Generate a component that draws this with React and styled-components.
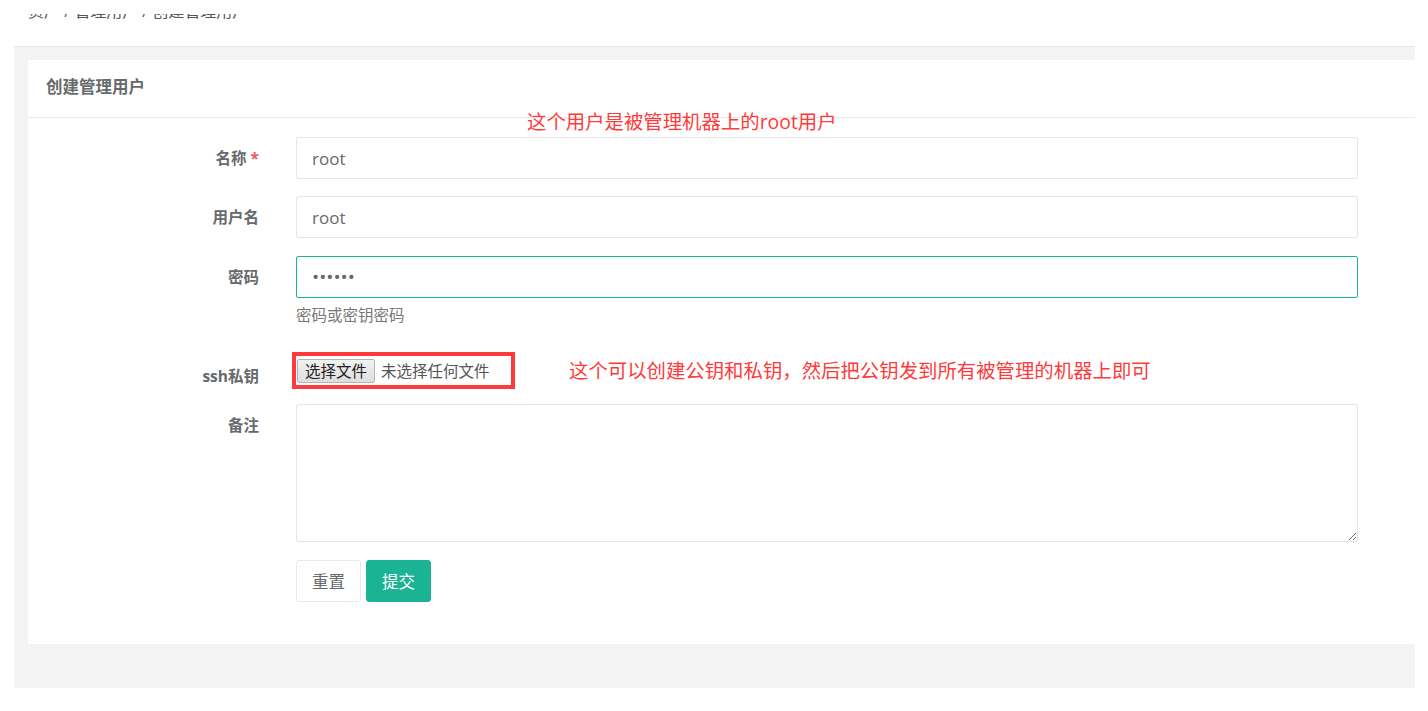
import React from 'react';
import styled, { createGlobalStyle } from 'styled-components';

const GlobalStyle = createGlobalStyle`
  body {
    margin: 0;
    background: #fff;
    font-family: "Open Sans", "Noto Sans CJK SC", sans-serif;
    color: #676a6c;
  }
`;

// Page frame
const TopBar = styled.div`
  height: 46px;
  overflow: hidden;
`;

const Crumbs = styled.div`
  margin: 14px 0 0 28px;
  height: 5px;
  overflow: hidden;
  font-size: 16px;
  line-height: 16px;
  color: #555;
  & > span {
    display: block;
    margin-top: -11px;
  }
`;

const Wrapper = styled.div`
  margin-left: 14px;
  width: 1401px;
  height: 642px;
  box-sizing: border-box;
  background: #f3f3f4;
  border-top: 1px solid #e7eaec;
  border-bottom-left-radius: 3px;
  padding: 13px 0 0 14px;
`;

// Card
const Card = styled.div`
  position: relative;
  background: #fff;
  height: 584px;
`;

const CardTitle = styled.div`
  height: 58px;
  box-sizing: border-box;
  border-bottom: 1px solid #e7eaec;
  padding: 0 0 6px 18px;
  display: flex;
  align-items: center;
  font-size: 16.5px;
  font-weight: 700;
  color: #676a6c;
`;

const Note = styled.div`
  font-size: 19.4px;
  line-height: 24px;
  color: #ff3a3a;
  white-space: nowrap;
`;

const TitleNote = styled(Note)`
  position: absolute;
  left: 499px;
  top: 50px;
`;

const Form = styled.form`
  padding-top: 19px;
`;

const Row = styled.div`
  display: grid;
  grid-template-columns: 231px 1062px;
  column-gap: 37px;
  align-items: start;
  margin-bottom: ${p => p.$gap || 0}px;
`;

const Label = styled.label`
  text-align: right;
  font-size: 15.5px;
  font-weight: 700;
  line-height: 42px;
  margin-top: ${p => p.$offset || 0}px;
  color: #676a6c;
`;

const Required = styled.span`
  color: #ed5565;
  margin-left: 4px;
`;

const Input = styled.input`
  display: block;
  width: 100%;
  height: 42px;
  box-sizing: border-box;
  border: 1px solid ${p => (p.$focus ? '#1ab394' : '#e5e6e7')};
  border-radius: 2px;
  padding: 0 15px;
  font-family: "Open Sans", "Noto Sans CJK SC", sans-serif;
  font-size: ${p => (p.type === 'password' ? 19 : 17)}px;
  color: #676a6c;
  outline: none;
  background: #fff;
`;

const Help = styled.div`
  margin-top: 7px;
  font-size: 15.5px;
  line-height: 20px;
  color: #777;
`;

const FileLine = styled.div`
  display: flex;
  align-items: center;
  gap: 54px;
  margin-left: -4px;
`;

const MarkBox = styled.div`
  border: 4px solid #ff3a3a;
  padding: 2px 2px 2px 1px;
  display: flex;
  align-items: center;
  width: 223px;
  height: 37px;
  box-sizing: border-box;
`;

const FileButton = styled.span`
  display: inline-block;
  height: 24px;
  line-height: 23px;
  padding: 0 7px;
  box-sizing: border-box;
  background: linear-gradient(#f2f2f2, #dedede);
  border: 1px solid #b5b5b5;
  border-radius: 2px;
  font-size: 15.5px;
  color: #222;
`;

const FileName = styled.span`
  margin-left: 6px;
  font-size: 15.5px;
  color: #555;
`;

const TextArea = styled.textarea`
  display: block;
  width: 100%;
  height: 138px;
  box-sizing: border-box;
  border: 1px solid #e5e6e7;
  border-radius: 2px;
  padding: 8px 15px;
  font-family: "Open Sans", "Noto Sans CJK SC", sans-serif;
  font-size: 16px;
  outline: none;
`;

const Actions = styled.div`
  display: flex;
  gap: 5px;
`;

const Button = styled.button`
  height: 42px;
  width: 65px;
  border-radius: 3px;
  font-family: "Open Sans", "Noto Sans CJK SC", sans-serif;
  font-size: 16.5px;
  cursor: pointer;
  border: 1px solid ${p => (p.$primary ? '#1ab394' : '#e7eaec')};
  background: ${p => (p.$primary ? '#1ab394' : '#fff')};
  color: ${p => (p.$primary ? '#fff' : '#676a6c')};
`;

const App = () => (
  <>
    <GlobalStyle />
    <TopBar>
      <Crumbs>
        <span>资产 / 管理用户 / 创建管理用户</span>
      </Crumbs>
    </TopBar>
    <Wrapper>
      <Card>
        <CardTitle>创建管理用户</CardTitle>
        <TitleNote>这个用户是被管理机器上的root用户</TitleNote>
        <Form onSubmit={e => e.preventDefault()}>
          <Row $gap={17}>
            <Label>
              名称<Required>*</Required>
            </Label>
            <Input defaultValue="root" />
          </Row>
          <Row $gap={18}>
            <Label>用户名</Label>
            <Input defaultValue="root" />
          </Row>
          <Row $gap={27}>
            <Label>密码</Label>
            <div>
              <Input type="password" defaultValue="123456" $focus />
              <Help>密码或密钥密码</Help>
            </div>
          </Row>
          <Row $gap={7}>
            <Label $offset={3}>ssh私钥</Label>
            <FileLine>
              <MarkBox>
                <FileButton>选择文件</FileButton>
                <FileName>未选择任何文件</FileName>
              </MarkBox>
              <Note>这个可以创建公钥和私钥，然后把公钥发到所有被管理的机器上即可</Note>
            </FileLine>
          </Row>
          <Row $gap={18}>
            <Label>备注</Label>
            <TextArea />
          </Row>
          <Row>
            <div />
            <Actions>
              <Button type="reset">重置</Button>
              <Button type="submit" $primary>提交</Button>
            </Actions>
          </Row>
        </Form>
      </Card>
    </Wrapper>
  </>
);

export default App;
